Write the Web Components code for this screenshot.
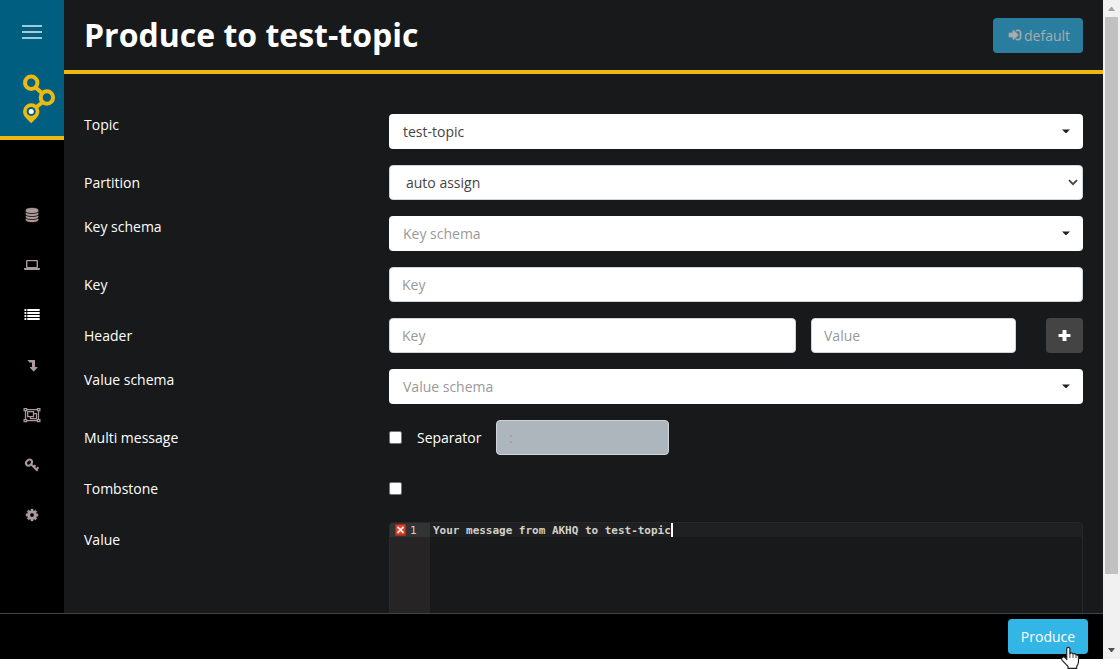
<!DOCTYPE html>
<html lang="en">
<head>
<meta charset="utf-8">
<title>Produce to test-topic</title>
<style>
html,body{margin:0;height:100%;background:#fff;overflow:hidden}
body{font:14px/21px "Open Sans",sans-serif;color:#fff}
</style>
</head>
<body>
<akhq-app></akhq-app>
<script>
const define = (name, html) => {
  const t = document.createElement('template');
  t.innerHTML = html;
  customElements.define(name, class extends HTMLElement {
    constructor() {
      super();
      this.attachShadow({mode: 'open'}).append(t.content.cloneNode(true));
    }
  });
};

const icons = {
  database: '<svg width="20" height="20" viewBox="0 0 20 20"><g transform="translate(2.800 3) scale(.0081 .0078125)" stroke="currentColor" stroke-width="40"><path d="M896 768q237 0 443-43t325-127v170q0 69-103 128t-280 93.5-385 34.5-385-34.5-280-93.5-103-128v-170q119 84 325 127t443 43zm0 768q237 0 443-43t325-127v170q0 69-103 128t-280 93.5-385 34.5-385-34.5-280-93.5-103-128v-170q119 84 325 127t443 43zm0-384q237 0 443-43t325-127v170q0 69-103 128t-280 93.5-385 34.5-385-34.5-280-93.5-103-128v-170q119 84 325 127t443 43zm0-1152q208 0 385 34.5t280 93.5 103 128v128q0 69-103 128t-280 93.5-385 34.5-385-34.5-280-93.5-103-128v-128q0-69 103-128t280-93.5 385-34.5z"/></g></svg>',
  laptop: '<svg width="20" height="20" viewBox="0 0 20 20"><path fill-rule="evenodd" d="M4 6q0-1 1-1h10q1 0 1 1v6q0 1-1 1H5q-1 0-1-1zM5.400 6.200v5.800h9.200V6.200zM2 13h16v1q0 1-1.200 1H3.200q-1.200 0-1.200-1z"/></svg>',
  list: '<svg width="20" height="20" viewBox="0 0 20 20"><path d="M2.500 4H4.300v2H2.500zM5.300 4H17.700v2H5.300zM2.500 7H4.300v2H2.500zM5.300 7H17.700v2H5.300zM2.500 10H4.300v2H2.500zM5.300 10H17.700v2H5.300zM2.500 13H4.300v2H2.500zM5.300 13H17.700v2H5.300z"/></svg>',
  down: '<svg width="20" height="20" viewBox="0 0 20 20"><path d="M5.800 4.900h6.700q.5 0 .5.500v6.600h2.200q.7 0 .2.700l-3.300 3.600q-.4.400-.8 0L8 12.700q-.5-.7.200-.7H10V7.400H7.900q-.3 0-.5-.2L5.600 5.300q-.2-.4.200-.4z"/></svg>',
  group: '<svg width="20" height="20" viewBox="0 0 20 20"><path fill="none" stroke="currentColor" stroke-width="1.250" d="M4 4.500h12M4 15.500h12M3.500 5v10M16.500 5v10M2.100 3.500h2.500v2H2.100zM15.400 3.500h2.500v2h-2.500zM2.100 14.500h2.500v2H2.100zM15.400 14.500h2.500v2h-2.500zM5.700 6.500h5.800v5H5.700zM12 8.500h2.500v5h-6V12"/></svg>',
  key: '<svg width="20" height="20" viewBox="0 0 20 20"><ellipse cx="7" cy="7.600" rx="3.300" ry="2.600" transform="rotate(-45 7 7.600)" fill="none" stroke="currentColor" stroke-width="2"/><path fill="none" stroke="currentColor" stroke-width="2" d="M9 9.300l6.600 6.600M14 14.400l2.500-2.200M11.600 12l1.900-1.800"/></svg>',
  cog: '<svg width="20" height="20" viewBox="0 0 20 20"><g transform="translate(3 3) scale(.0078125)" stroke="currentColor" stroke-width="40"><path d="M1152 896q0-106-75-181t-181-75-181 75-75 181 75 181 181 75 181-75 75-181zm512-109v222q0 12-8 23t-20 13l-185 28q-19 54-39 91 35 50 107 138 10 12 10 25t-9 23q-27 37-99 108t-94 71q-12 0-26-9l-138-108q-44 23-91 38-16 136-29 186-7 28-36 28h-222q-14 0-24.500-8.500t-11.500-21.500l-28-184q-49-16-90-37l-141 107q-10 9-25 9-14 0-25-11-126-114-165-168-7-10-7-23 0-12 8-23 15-21 51-66.500t54-70.500q-27-50-41-99l-183-27q-13-2-21-12.500t-8-23.500v-222q0-12 8-23t19-13l186-28q14-46 39-92-40-57-107-138-10-12-10-24 0-10 9-23 26-36 98.500-107.500t94.500-71.500q13 0 26 10l138 107q44-23 91-38 16-136 29-186 7-28 36-28h222q14 0 24.500 8.500t11.500 21.500l28 184q49 16 90 37l142-107q9-9 24-9 13 0 25 10 129 119 165 170 7 8 7 22 0 12-8 23-15 21-51 66.500t-54 70.500q26 50 41 98l183 28q13 2 21 12.500t8 23.500z"/></g></svg>',
  signin: '<svg width="14" height="14" viewBox="0 0 1792 1792"><path stroke="currentColor" stroke-width="90" d="M1312 896q0 26-19 45l-544 544q-19 19-45 19t-45-19-19-45v-288h-448q-26 0-45-19t-19-45v-384q0-26 19-45t45-19h448v-288q0-26 19-45t45-19 45 19l544 544q19 19 19 45zm352-352v704q0 119-84.500 203.500t-203.500 84.500h-320q-13 0-22.500-9.500t-9.500-22.500q0-4-1-20t-.5-26.500 3-23.500 10-19.500 20.500-6.500h320q66 0 113-47t47-113v-704q0-66-47-113t-113-47h-312l-11.500-1-11.500-3-8-5.500-7-9-2-13.500q0-4-1-20t-.5-26.500 3-23.500 10-19.500 20.500-6.500h320q119 0 203.500 84.500t84.500 203.500z"/></svg>',
  plus: '<svg width="13" height="13" viewBox="0 0 13 13"><path d="M5 1h3q.5 0 .5.500V5H12q.5 0 .5.500v2q0 .5-.5.500H8.500v3.500q0 .5-.5.500H5q-.5 0-.5-.5V8H1q-.5 0-.5-.5v-2Q.5 5 1 5h3.500V1.500Q4.500 1 5 1z"/></svg>'
};
customElements.define('fa-icon', class extends HTMLElement {
  constructor() {
    super();
    this.attachShadow({mode: 'open'});
  }
  connectedCallback() {
    this.shadowRoot.innerHTML = '<style>:host{display:block}svg{display:block;fill:currentColor}</style>' + icons[this.getAttribute('name')];
  }
});

define('side-item', `<style>
:host{display:flex;height:50px;align-items:center;justify-content:center;color:#ab9a9b}
:host([active]){color:#fff}</style><slot></slot>`);

define('side-bar', `<style>
:host{display:block;width:64px;height:613px;background:#000;flex:none}
.brand{height:136px;background:#005f81;border-bottom:4px solid #ecb911}
svg{display:block}
nav{padding-top:50px}</style>
<div class="brand"><svg width="64" height="136" viewBox="0 0 64 136">
<path fill="#a6c8d4" d="M22 25h20v2H22zM22 31h20v2H22zM22 37h20v2H22z"/>
<path stroke="#ecb911" stroke-width="4" d="M35 87l8 7M43 102l-8 6"/>
<g fill="none" stroke="#ecb911" stroke-width="4"><circle cx="31.200" cy="82.800" r="6.200"/><circle cx="46.900" cy="97.500" r="6.200"/></g>
<path fill="#ecb911" d="M31.200 103.300a8.200 8.200 0 0 1 8.200 8.200c0 3-1.600 5.100-3.400 7l-4.800 4.700-4.800-4.700c-1.800-1.900-3.400-4-3.400-7a8.200 8.200 0 0 1 8.200-8.200z"/>
<circle cx="31.200" cy="111.400" r="4.500" fill="#005f81"/><circle cx="31.200" cy="111.400" r="2.500" fill="#fff"/></svg></div>
<nav><side-item><fa-icon name="database"></fa-icon></side-item>
<side-item><fa-icon name="laptop"></fa-icon></side-item>
<side-item active><fa-icon name="list"></fa-icon></side-item>
<side-item><fa-icon name="down"></fa-icon></side-item>
<side-item><fa-icon name="group"></fa-icon></side-item>
<side-item><fa-icon name="key"></fa-icon></side-item>
<side-item><fa-icon name="cog"></fa-icon></side-item></nav>`);

define('page-header', `<style>
:host{display:flex;height:70px;border-bottom:4px solid #ecb911;align-items:center;justify-content:space-between;padding:0 20px}
h1{margin:0;font-size:32px;line-height:38px;font-weight:700}
.btn{box-sizing:border-box;width:90px;height:35px;border-radius:4px;background:#297e9f;color:#aaabab;display:flex;align-items:center;padding-left:15px;gap:2px}
</style><h1><slot></slot></h1><div class="btn"><fa-icon name="signin"></fa-icon><span>default</span></div>`);

define('form-row', `<style>
:host{display:grid;grid-template-columns:305px 1fr;height:35px;margin-bottom:16px}
.label{line-height:21px;padding-top:7px}
:host([top]) .label{padding-top:0}
.field{display:flex;align-items:center}
</style><div class="label"><slot name="label"></slot></div><div class="field"><slot></slot></div>`);

define('drop-down', `<style>
:host{display:flex;box-sizing:border-box;width:100%;height:35px;background:#fff;border-radius:4px;align-items:center;justify-content:space-between;padding:0 13px 0 14px;color:#444}
:host([empty]){color:#999}
svg{display:block}
</style><slot></slot><svg width="8" height="5" viewBox="0 0 8 5"><path fill="#222" d="M0 .5h8L4.500 4h-1z"/></svg>`);

define('select-box', `<style>
:host{display:flex;box-sizing:border-box;width:100%;height:35px;background:#fff;border:1px solid #ced4da;border-radius:4px;align-items:center;justify-content:space-between;padding:0 4px 0 16px;color:#444}
svg{display:block}
</style><slot></slot><svg width="10" height="7" viewBox="0 0 10 7"><path fill="none" stroke="#444" stroke-width="1.800" d="M1 1.200l4 4 4-4"/></svg>`);

define('text-box', `<style>
:host{display:flex;box-sizing:border-box;width:100%;height:35px;background:#fff;border:1px solid #ced4da;border-radius:4px;align-items:center;padding:0 12px;color:#999;flex:none}
:host([disabled]){background:#adb5bd;border-color:#ced4da}
</style><slot></slot>`);

define('check-box', `<style>
:host{display:block;box-sizing:border-box;width:13px;height:13px;background:#fff;border:1px solid #767676;border-radius:2px;flex:none}
</style>`);

define('add-button', `<style>
:host{display:flex;width:37px;height:35px;background:#444;border-radius:4px;align-items:center;justify-content:center;flex:none}
</style><fa-icon name="plus"></fa-icon>`);

define('code-editor', `<style>
:host{display:flex;box-sizing:border-box;width:100%;height:120px;border:1px solid #282828;border-radius:4px;align-self:flex-start;flex:none;overflow:hidden;font:bold 11px/16px "DejaVu Sans Mono",monospace;color:#d3cfc8}
.gutter{width:40px;background:#272425;flex:none}
.num{height:14px;background:#323334;display:flex;align-items:flex-start;font-weight:400}
.num svg{margin:1px 4px 0 5px}
.body{flex:1}
.line{height:14px;background:#1e2021;padding-left:3px;display:flex;white-space:pre;letter-spacing:-.018px}
.cursor{width:2px;height:14px;background:#fff}
</style><div class="gutter"><div class="num"><svg width="11" height="12" viewBox="0 0 11 12"><rect width="11" height="12" rx="1" fill="#a92a1b"/><rect x="1" y="1" width="9" height="9.500" fill="#df4128"/><path d="M2.500 2.800l6 6M8.500 2.800l-6 6" stroke="#f6ece8" stroke-width="1.900"/></svg><span>1</span></div></div>
<div class="body"><div class="line"><slot></slot><span class="cursor"></span></div></div>`);

define('produce-form', `<style>
:host{display:block;padding:40px 20px 0}
.h1{width:407px;margin-right:15px}.h2{width:205px;margin-right:30px}
.sep{width:65px;white-space:nowrap;margin:0 14px 0 15px;letter-spacing:-.02px}.sepbox{width:173px}
</style>
<form-row top><span slot="label">Topic</span><drop-down>test-topic</drop-down></form-row>
<form-row><span slot="label">Partition</span><select-box>auto assign</select-box></form-row>
<form-row top><span slot="label">Key schema</span><drop-down empty>Key schema</drop-down></form-row>
<form-row><span slot="label">Key</span><text-box>Key</text-box></form-row>
<form-row><span slot="label">Header</span><text-box class="h1">Key</text-box><text-box class="h2">Value</text-box><add-button></add-button></form-row>
<form-row top><span slot="label">Value schema</span><drop-down empty>Value schema</drop-down></form-row>
<form-row><span slot="label">Multi message</span><check-box></check-box><span class="sep">Separator</span><text-box class="sepbox" disabled>:</text-box></form-row>
<form-row><span slot="label">Tombstone</span><check-box></check-box></form-row>
<form-row><span slot="label">Value</span><code-editor>Your message from AKHQ to test-topic</code-editor></form-row>`);

define('page-footer', `<style>
:host{display:flex;box-sizing:border-box;height:46px;background:#000;border-top:1px solid #444;padding:5px 15px 0;justify-content:flex-end}
.btn{width:80px;height:35px;line-height:35px;text-align:center;background:#33b5e5;border-radius:4px}
</style><div class="btn"><slot></slot></div>`);

define('scroll-bar', `<style>
:host{display:flex;flex-direction:column;width:17px;height:659px;background:#f1f1f1;flex:none;align-items:center}
.thumb{width:13px;height:557px;background:#c1c1c1}
svg{display:block;flex:none}
.gap{flex:1}
</style><svg width="17" height="17"><path fill="#a3a3a3" d="M5 11h7L9 7H8z"/></svg><div class="thumb"></div><div class="gap"></div><svg width="17" height="17"><path fill="#505050" d="M5 6h7L9 10H8z"/></svg>`);

define('hand-pointer', `<style>
:host{display:block;position:absolute;left:1060px;top:646px}
svg{display:block}
</style><svg width="22" height="23" viewBox="0 0 22 23"><path fill="#fff" stroke="#222" stroke-width="1.200" stroke-linejoin="round" d="M6.700 13.500V3Q6.700 1.400 8.300 1.400T9.900 3v4.800q.2-1 1.500-1t1.700 1.300q.3-.7 1.500-.5t1.500 1.400q2.400-.4 2.400 1.900v4.600q0 2.700-1.800 4.900v2H8v-2L2.200 14.300Q.9 12.200 2.500 11.300t3 .7z"/><path stroke="#333" stroke-width=".9" d="M9.900 7.800V12M13 8.300V12M16 9.300V12"/></svg>`);

define('akhq-app', `<style>
:host{display:flex;width:1120px;height:669px;position:relative;overflow:hidden}
.app{width:1103px;height:659px}
.top{display:flex;height:613px;background:#17191a}
main{flex:1;height:613px;overflow:hidden}
</style><div class="app"><div class="top"><side-bar></side-bar><main><page-header>Produce to test-topic</page-header><produce-form></produce-form></main></div><page-footer>Produce</page-footer></div><scroll-bar></scroll-bar><hand-pointer></hand-pointer>`);
</script>
</body>
</html>
